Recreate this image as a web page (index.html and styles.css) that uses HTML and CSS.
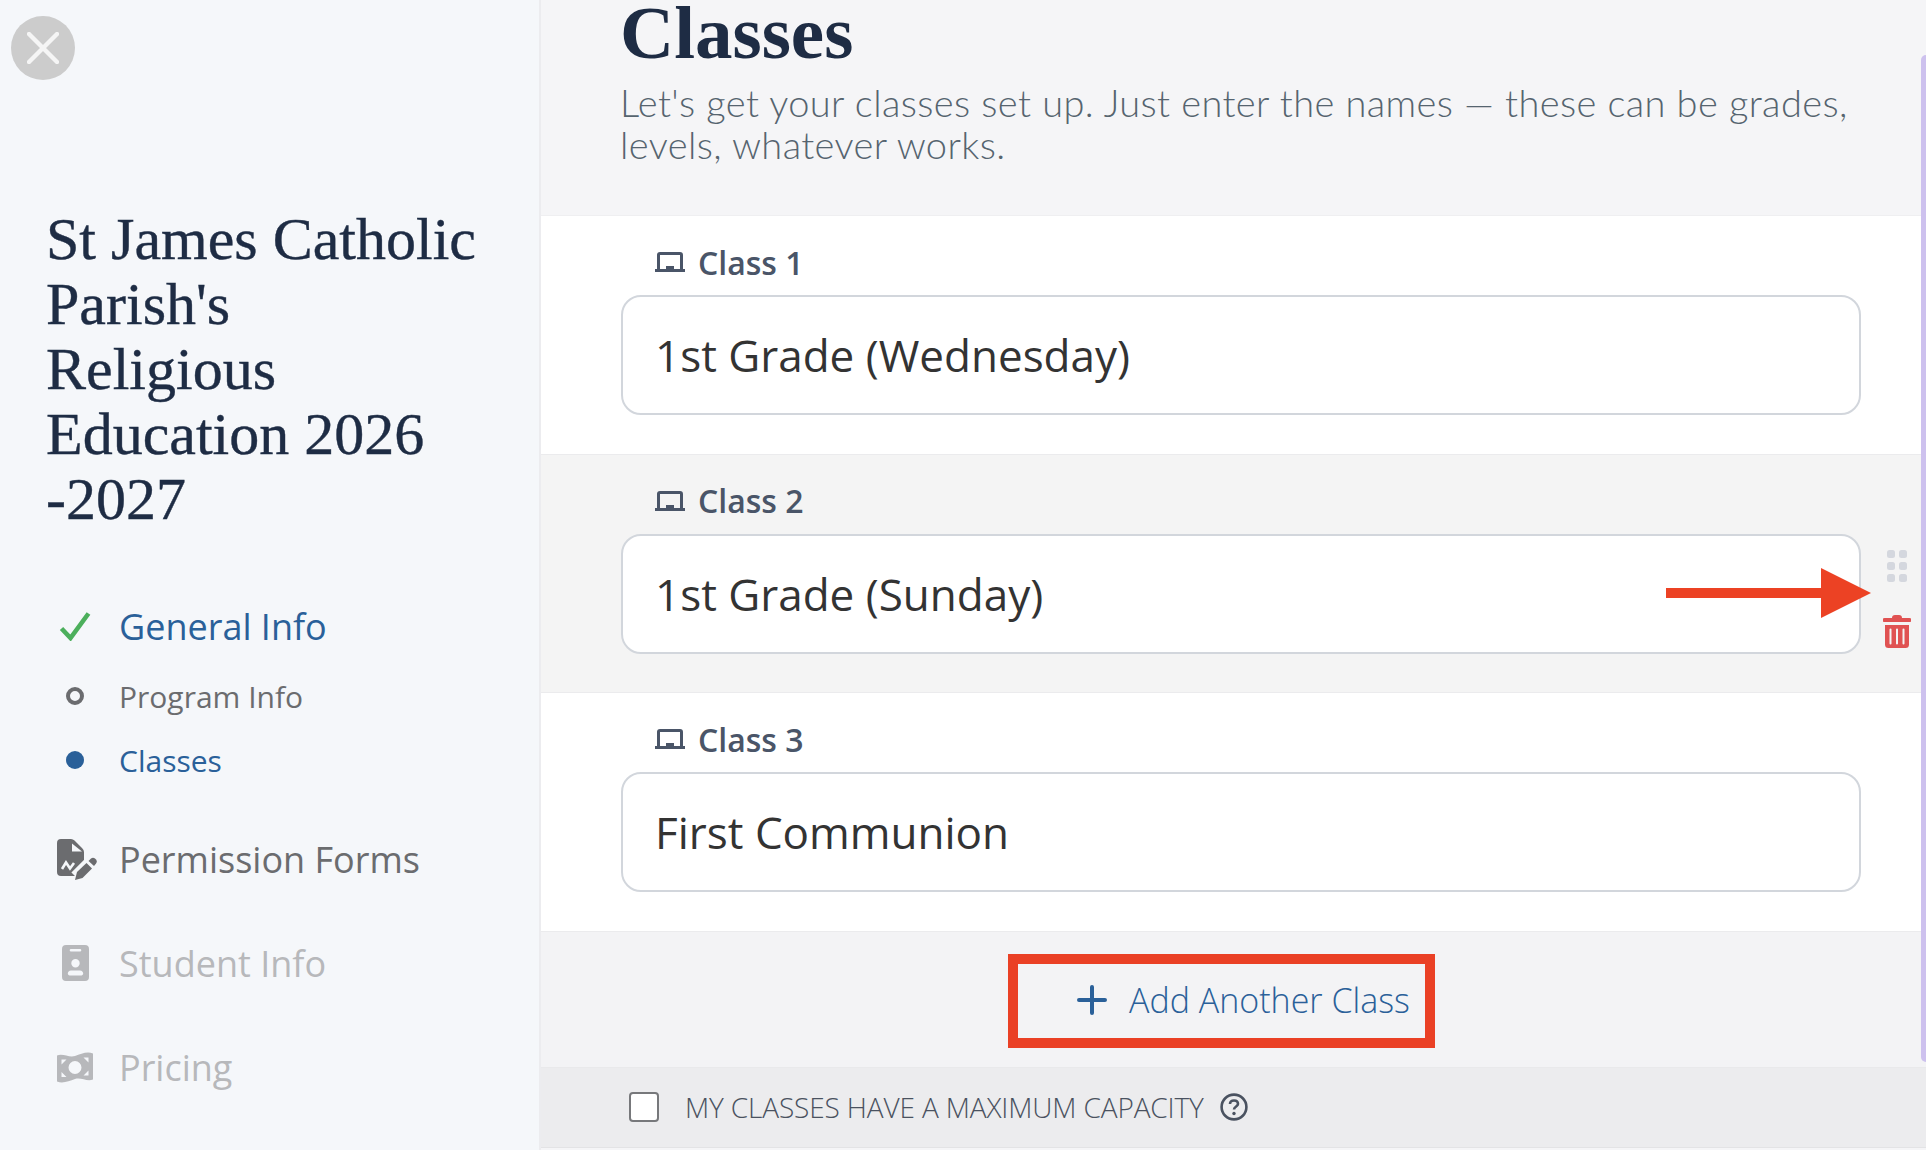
FILE: index.html
```html
<!DOCTYPE html>
<html lang="en">
<head>
    <meta charset="UTF-8">
    <meta name="viewport" content="width=device-width, initial-scale=1.0">
    <title>Classes</title>
    <link rel="stylesheet" href="styles.css">
</head>
<body>
    <div class="layout">
        <aside class="sidebar">
            <button class="close-btn" aria-label="Close">
                <svg viewBox="0 0 32 32" width="32" height="32"><path d="M2 2L30 30M30 2L2 30" stroke="#f5f5f5" stroke-width="4.4" stroke-linecap="round"/></svg>
            </button>
            <h1 class="program-title">St James Catholic Parish's<br>Religious Education 2026 -2027</h1>
            <nav class="steps">
                <div class="step step-done">
                    <span class="step-icon">
                        <svg viewBox="0 0 32 30" width="32" height="30"><path d="M2.5 17.5L11.5 27L29.5 2.5" fill="none" stroke="#4caf5c" stroke-width="4.6"/></svg>
                    </span>
                    General Info
                </div>
                <div class="step sub-step sub-visited">
                    <span class="step-icon"><span class="dot-ring"></span></span>
                    Program Info
                </div>
                <div class="step sub-step sub-active">
                    <span class="step-icon"><span class="dot-fill"></span></span>
                    Classes
                </div>
                <div class="step step-open">
                    <span class="step-icon">
                        <svg class="forms-icon" viewBox="0 0 40 41" width="40" height="41">
                            <path fill="#6b6c6f" fill-rule="evenodd" d="M4 0H14Q16 0 17.5 1.5L25 9Q27 11 27 13V33Q27 37 23 37H4Q0 37 0 33V4Q0 0 4 0ZM15 4.5V12.5H25Z"/>
                            <path d="M5 30L9 23.5L13 29.5L17 24" fill="none" stroke="#f5f7fa" stroke-width="2.6"/>
                            <path d="M19 38L36 21" stroke="#f5f7fa" stroke-width="13"/>
                            <path fill="#6b6c6f" d="M18 41L20 33L29.5 24L35 29.5L25.5 39Z"/>
                            <path fill="#6b6c6f" d="M31.5 22L34 19.5Q36 18 38 19.5L39 20.5Q40.5 22.5 39 24.5L37 27Z"/>
                        </svg>
                    </span>
                    Permission Forms
                </div>
                <div class="step step-locked">
                    <span class="step-icon">
                        <svg viewBox="0 0 27 36" width="27" height="36"><path fill="#b7b8bb" fill-rule="evenodd" d="M4 0H23A4 4 0 0 1 27 4V32A4 4 0 0 1 23 36H4A4 4 0 0 1 0 32V4A4 4 0 0 1 4 0ZM9 4A1.2 1.2 0 0 0 9 6.6H18A1.2 1.2 0 0 0 18 4ZM13.5 14A4.2 4.2 0 1 0 13.5 22.4A4.2 4.2 0 1 0 13.5 14ZM9 25.5C7 25.5 5.8 27 5.8 28.6C5.8 29.8 6.6 30.4 7.6 30.4H19.4C20.4 30.4 21.2 29.8 21.2 28.6C21.2 27 20 25.5 18 25.5Z"/></svg>
                    </span>
                    Student Info
                </div>
                <div class="step step-locked">
                    <span class="step-icon">
                        <svg viewBox="0 0 36 31" width="36" height="31"><path fill="#b7b8bb" fill-rule="evenodd" d="M0 3.5C6 1 12 6 18 4S30 -1 36 1.5V27.5C30 30 24 25 18 27S6 32 0 29.5ZM18 9A6.5 6.5 0 1 0 18 22A6.5 6.5 0 1 0 18 9ZM4.5 7.5V12.5L9.5 7.5ZM31.5 5.5H26.5L31.5 10.5ZM4.5 20V25H9.5ZM31.5 18.5L26.5 23.5H31.5Z"/></svg>
                    </span>
                    Pricing
                </div>
            </nav>
        </aside>
        <main class="content">
            <header class="page-head">
                <h2>Classes</h2>
                <p>Let's get your classes set up. Just enter the names — these can be grades, levels, whatever works.</p>
            </header>

            <section class="class-row">
                <label class="class-label">
                    <svg class="board-icon" viewBox="0 0 30 20" width="30" height="20"><path fill="#4a5568" fill-rule="evenodd" d="M5 0H25Q28 0 28 3V17H30V20H0V17H2V3Q2 0 5 0ZM5 3V17H11V14H19V17H25V3Z"/></svg>
                    Class 1
                </label>
                <input class="class-input" type="text" value="1st Grade (Wednesday)">
            </section>

            <section class="class-row row-alt">
                <label class="class-label">
                    <svg class="board-icon" viewBox="0 0 30 20" width="30" height="20"><path fill="#4a5568" fill-rule="evenodd" d="M5 0H25Q28 0 28 3V17H30V20H0V17H2V3Q2 0 5 0ZM5 3V17H11V14H19V17H25V3Z"/></svg>
                    Class 2
                </label>
                <input class="class-input" type="text" value="1st Grade (Sunday)">
                <div class="row-tools">
                    <div class="grip"><i></i><i></i><i></i><i></i><i></i><i></i></div>
                    <svg viewBox="0 0 28 33" width="28" height="33"><path fill="#e05252" fill-rule="evenodd" d="M9 3Q9 0 12 0H16Q19 0 19 3H26.5A1.8 1.8 0 0 1 26.5 7H1.5A1.8 1.8 0 0 1 1.5 3ZM2 10H26V29.5Q26 33 22.5 33H5.5Q2 33 2 29.5ZM7.5 13.5A1 1 0 0 0 6.5 14.5V28.5A1 1 0 0 0 8.5 28.5V14.5A1 1 0 0 0 7.5 13.5ZM14 13.5A1 1 0 0 0 13 14.5V28.5A1 1 0 0 0 15 28.5V14.5A1 1 0 0 0 14 13.5ZM20.5 13.5A1 1 0 0 0 19.5 14.5V28.5A1 1 0 0 0 21.5 28.5V14.5A1 1 0 0 0 20.5 13.5Z"/></svg>
                </div>
                <svg class="arrow-mark" viewBox="0 0 205 50" width="205" height="50"><path fill="#ec4224" d="M0 20H155V0L205 25L155 50V30H0Z"/></svg>
            </section>

            <section class="class-row">
                <label class="class-label">
                    <svg class="board-icon" viewBox="0 0 30 20" width="30" height="20"><path fill="#4a5568" fill-rule="evenodd" d="M5 0H25Q28 0 28 3V17H30V20H0V17H2V3Q2 0 5 0ZM5 3V17H11V14H19V17H25V3Z"/></svg>
                    Class 3
                </label>
                <input class="class-input" type="text" value="First Communion">
            </section>

            <div class="add-row">
                <button class="add-btn">
                    <svg viewBox="0 0 30 30" width="30" height="30"><path d="M15 2V28M2 15H28" stroke="#2a6099" stroke-width="4" stroke-linecap="round"/></svg>
                    Add Another Class
                </button>
                <div class="box-mark"></div>
            </div>

            <div class="capacity-row">
                <span class="check-box"></span>
                <span class="capacity-text">MY CLASSES HAVE A MAXIMUM CAPACITY</span>
                <svg viewBox="0 0 28 28" width="28" height="28"><circle cx="14" cy="14" r="12.4" fill="none" stroke="#4a5260" stroke-width="2.6"/><path d="M10 11Q10 7.5 14 7.5T18 11C18 13.5 14 13.5 14 16.5" fill="none" stroke="#4a5260" stroke-width="2.6"/><circle cx="14" cy="20.5" r="1.7" fill="#4a5260"/></svg>
            </div>
        </main>
    </div>
    <div class="scroll-thumb"></div>
</body>
</html>
```

FILE: styles.css
```css
html, body {
    margin: 0;
    height: 100%;
    overflow: hidden;
    background: #f5f5f7;
}
body {
    font-family: 'Open Sans', sans-serif;
}
.layout {
    display: flex;
    height: 1150px;
}
.sidebar {
    width: 541px;
    flex-shrink: 0;
    box-sizing: border-box;
    padding: 16px 0 0 46px;
    background: #f5f7fa;
    border-right: 2px solid #ececef;
}
.close-btn {
    display: flex;
    align-items: center;
    justify-content: center;
    width: 64px;
    height: 64px;
    margin-left: -35px;
    padding: 0;
    border: none;
    border-radius: 50%;
    background: #cccccc;
}
.program-title {
    width: 460px;
    margin: 127px 0 0;
    font-family: 'Liberation Serif', serif;
    font-size: 60px;
    font-weight: 400;
    line-height: 65px;
    color: #1e2c44;
    -webkit-text-stroke: 0.4px #1e2c44;
}
.steps {
    margin-top: 72px;
}
.step {
    display: flex;
    align-items: center;
    height: 44px;
    font-size: 36px;
}
.step-icon {
    display: flex;
    align-items: center;
    justify-content: center;
    width: 56px;
    margin-right: 16px;
    margin-left: 1px;
    flex-shrink: 0;
}
.forms-icon {
    margin-left: 4px;
}
.step-done {
    color: #2a6099;
}
.sub-step {
    height: 40px;
    margin-top: 24px;
    font-size: 30px;
}
.sub-visited {
    margin-top: 28px;
    color: #6b6c6f;
}
.sub-active {
    color: #2a6099;
}
.dot-ring {
    width: 10px;
    height: 10px;
    border: 4px solid #6b6c6f;
    border-radius: 50%;
}
.dot-fill {
    width: 18px;
    height: 18px;
    border-radius: 50%;
    background: #2a6099;
}
.step-open {
    margin-top: 57px;
    color: #6b6c6f;
}
.step-locked {
    margin-top: 60px;
    color: #b7b8bb;
}
.content {
    flex: 1;
    min-width: 0;
}
.page-head {
    height: 216px;
    box-sizing: border-box;
    padding: 0 0 0 79px;
    background: #f5f5f7;
    border-bottom: 1px solid #efeff1;
}
.page-head h2 {
    margin: 0;
    font-family: 'Liberation Serif', serif;
    font-size: 75px;
    font-weight: 700;
    line-height: 66px;
    color: #1e2c44;
}
.page-head p {
    width: 1260px;
    margin: 16px 0 0;
    font-family: 'Lato', sans-serif;
    font-size: 38px;
    font-weight: 300;
    letter-spacing: 0.4px;
    line-height: 41.5px;
    color: #56646f;
}
.class-row {
    position: relative;
    height: 238.5px;
    box-sizing: border-box;
    padding: 26px 65px 0 80px;
    background: #ffffff;
    border-bottom: 1px solid #ebebed;
}
.row-alt {
    background: #f4f4f4;
}
.class-label {
    display: flex;
    align-items: center;
    height: 40px;
    padding-left: 34px;
    font-size: 32px;
    font-weight: 600;
    color: #4a5568;
}
.board-icon {
    margin-right: 13px;
}
.class-input {
    display: block;
    width: 100%;
    height: 120px;
    box-sizing: border-box;
    margin-top: 13px;
    padding: 0 32px;
    border: 2px solid #d2d6dc;
    border-radius: 20px;
    background: #ffffff;
    font-family: 'Open Sans', sans-serif;
    font-size: 44px;
    color: #333333;
}
.row-tools {
    position: absolute;
    top: 95px;
    right: 15px;
    display: flex;
    flex-direction: column;
    align-items: center;
    gap: 33px;
}
.grip {
    display: grid;
    grid-template-columns: 8px 8px;
    grid-auto-rows: 8px;
    gap: 4px;
}
.grip i {
    border-radius: 2.5px;
    background: #d4d7de;
}
.arrow-mark {
    position: absolute;
    top: 113px;
    left: 1125px;
}
.add-row {
    position: relative;
    display: flex;
    align-items: center;
    justify-content: center;
    height: 136px;
    box-sizing: border-box;
    padding: 1px 0 0 20px;
    background: #f3f3f5;
    border-bottom: 1px solid #e9e9eb;
}
.add-btn {
    display: flex;
    align-items: center;
    gap: 22px;
    padding: 0;
    border: none;
    background: none;
    font-family: 'Open Sans', sans-serif;
    font-size: 34px;
    font-weight: 300;
    color: #2a6099;
}
.box-mark {
    position: absolute;
    top: 22px;
    left: 467px;
    width: 407px;
    height: 74px;
    border: 10px solid #ea4025;
}
.capacity-row {
    display: flex;
    align-items: center;
    height: 80px;
    box-sizing: border-box;
    padding-left: 88px;
    background: #ececee;
    border-bottom: 1px solid #e3e3e5;
}
.check-box {
    width: 26px;
    height: 26px;
    border: 2px solid #77787b;
    border-radius: 4px;
    background: #ffffff;
    margin-right: 26px;
}
.capacity-text {
    margin-right: 16px;
    font-size: 28px;
    font-weight: 300;
    letter-spacing: -0.14px;
    color: #4a5260;
}
.scroll-thumb {
    position: absolute;
    top: 55px;
    right: 0;
    width: 5px;
    height: 1007px;
    border-radius: 5px 0 0 5px;
    background: #cdc1ee;
}
```
